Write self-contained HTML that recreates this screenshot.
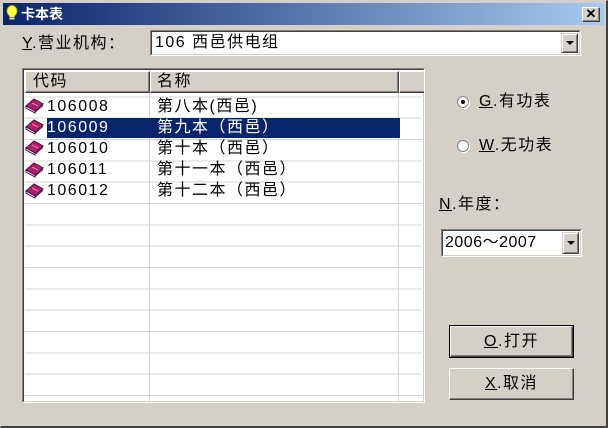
<!DOCTYPE html>
<html><head><meta charset="utf-8"><style>
*{margin:0;padding:0;box-sizing:border-box}
body{width:608px;height:428px;overflow:hidden;background:#d4d0c8;font-family:"Liberation Sans","Noto Sans CJK SC","WenQuanYi Zen Hei",sans-serif;font-size:16px;letter-spacing:1.5px;color:#000;position:relative}
.a{position:absolute;white-space:nowrap}
#win{position:absolute;left:0;top:0;width:608px;height:428px;border-top:1px solid #d4d0c8;border-left:1px solid #d4d0c8;border-right:2px solid #404040;border-bottom:2px solid #404040}
#title{position:absolute;left:3px;top:3px;width:601px;height:22px;background:linear-gradient(90deg,#0a246a,#a6caf0)}
.sunk{border-top:1px solid #808080;border-left:1px solid #808080;border-right:1px solid #fff;border-bottom:1px solid #fff}
.in{position:absolute;inset:0;border-top:1px solid #404040;border-left:1px solid #404040;border-right:1px solid #d4d0c8;border-bottom:1px solid #d4d0c8}
.btn{background:#d4d0c8;border-top:1px solid #fff;border-left:1px solid #fff;border-right:1px solid #404040;border-bottom:1px solid #404040;box-shadow:inset -1px -1px 0 #808080}
.dd{position:absolute;width:17px;background:#d4d0c8;border-top:1px solid #d4d0c8;border-left:1px solid #d4d0c8;border-right:1px solid #404040;border-bottom:1px solid #404040;box-shadow:inset 1px 1px 0 #fff,inset -1px -1px 0 #808080}
.dd:after{content:"";position:absolute;left:4px;top:50%;margin-top:-2px;border-left:4px solid transparent;border-right:4px solid transparent;border-top:4px solid #000}
u{text-decoration:underline}
</style></head><body>
<div id="win"></div>
<div id="title"></div>
<svg class="a" style="left:6px;top:5px" width="12" height="18" viewBox="0 0 12 18"><ellipse cx="6" cy="6" rx="5" ry="5.5" fill="#ffff40" stroke="#c0a000" stroke-width="0.8"/><rect x="3.5" y="10" width="5" height="5" fill="#ffff40"/><rect x="3.5" y="12" width="5" height="1" fill="#808080"/><rect x="3.5" y="14" width="5" height="1" fill="#808080"/></svg>
<div class="a" style="left:21px;top:4px;color:#fff;font-weight:bold;font-size:14px;line-height:20px;letter-spacing:0">卡本表</div>
<div class="a btn" style="left:582px;top:7px;width:18px;height:15px;font-size:13px;line-height:12px;text-align:center;font-weight:bold;letter-spacing:0">✕</div>

<div class="a" style="left:22px;top:34px;line-height:20px"><u>Y</u>.营业机构：</div>
<div class="a sunk" style="left:150px;top:30px;width:431px;height:26px;background:#fff"><div class="in"></div>
<div class="a" style="left:4px;top:2px;line-height:20px">106 西邑供电组</div>
<div class="dd" style="right:2px;top:2px;height:20px"></div></div>

<div class="a sunk" style="left:22px;top:68px;width:403px;height:335px;background:#fff;overflow:hidden"><div class="in"></div>
<div class="a" style="left:2px;top:2px;width:397px;height:329px;background:repeating-linear-gradient(180deg,#fff 0,#fff 20.33px,#d8d4cc 20.33px,#d8d4cc 21.33px);background-position:0 5px"></div>
<div class="a" style="left:126px;top:2px;width:1px;height:330px;background:#d8d4cc"></div>
<div class="a" style="left:375px;top:2px;width:1px;height:330px;background:#d8d4cc"></div>
<div class="a btn" style="left:2px;top:2px;width:125px;height:22px"></div>
<div class="a btn" style="left:127px;top:2px;width:249px;height:22px"></div>
<div class="a btn" style="left:376px;top:2px;width:30px;height:22px"></div>
<div class="a" style="left:10px;top:2px;line-height:22px">代码</div>
<div class="a" style="left:134px;top:2px;line-height:22px">名称</div>
<div class="a" style="left:24px;top:49px;width:353px;height:20px;background:#0a246a"></div>
</div>
<svg width="0" height="0" style="position:absolute"><defs><g id="bk"><path d="M1 10 L9 3 L18 8 L10 15 Z" fill="#b0206a" stroke="#401040" stroke-width="1"/><path d="M1 10 L10 15 L10 17 L1 12 Z" fill="#fff" stroke="#401040" stroke-width="1"/><path d="M10 15 L18 8 L18 10 L10 17Z" fill="#602060"/><path d="M7 7 L13 10" stroke="#ff80a0" stroke-width="1"/></g></defs></svg>
<svg class="a" style="left:25px;top:96px" width="20" height="18"><use href="#bk"/></svg>
<svg class="a" style="left:25px;top:117px" width="20" height="18"><use href="#bk"/></svg>
<svg class="a" style="left:25px;top:138px" width="20" height="18"><use href="#bk"/></svg>
<svg class="a" style="left:25px;top:160px" width="20" height="18"><use href="#bk"/></svg>
<svg class="a" style="left:25px;top:181px" width="20" height="18"><use href="#bk"/></svg>
<div class="a" style="left:47px;top:97px;line-height:20px">106008</div>
<div class="a" style="left:47px;top:118px;line-height:20px;color:#fff">106009</div>
<div class="a" style="left:47px;top:139px;line-height:20px">106010</div>
<div class="a" style="left:47px;top:160px;line-height:20px">106011</div>
<div class="a" style="left:47px;top:181px;line-height:20px">106012</div>
<div class="a" style="left:157px;top:97px;line-height:20px">第八本(西邑)</div>
<div class="a" style="left:157px;top:118px;line-height:20px;color:#fff">第九本（西邑）</div>
<div class="a" style="left:157px;top:139px;line-height:20px">第十本（西邑）</div>
<div class="a" style="left:157px;top:160px;line-height:20px">第十一本（西邑）</div>
<div class="a" style="left:157px;top:181px;line-height:20px">第十二本（西邑）</div>

<div class="a" style="left:457px;top:96px;width:12px;height:12px;border-radius:50%;background:#fff;border:1px solid #808080;box-shadow:1px 1px 0 #fff"><div class="a" style="left:3px;top:3px;width:4px;height:4px;background:#000;border-radius:50%"></div></div>
<div class="a" style="left:479px;top:92px;line-height:20px"><u>G</u>.有功表</div>
<div class="a" style="left:457px;top:140px;width:12px;height:12px;border-radius:50%;background:#fff;border:1px solid #808080;box-shadow:1px 1px 0 #fff"></div>
<div class="a" style="left:479px;top:136px;line-height:20px"><u>W</u>.无功表</div>
<div class="a" style="left:439px;top:195px;line-height:20px"><u>N</u>.年度：</div>
<div class="a sunk" style="left:441px;top:229px;width:141px;height:28px;background:#fff"><div class="in"></div>
<div class="a" style="left:3px;top:3px;line-height:20px;letter-spacing:0.5px">2006～2007</div>
<div class="dd" style="right:2px;top:2px;height:22px"></div></div>

<div class="a" style="left:449px;top:325px;width:125px;height:33px;border:1px solid #000"><div class="a btn" style="left:0;top:0;width:123px;height:31px;text-align:center;line-height:29px"><u>O</u>.打开</div></div>
<div class="a btn" style="left:449px;top:368px;width:125px;height:32px;text-align:center;line-height:30px"><u>X</u>.取消</div>
</body></html>
